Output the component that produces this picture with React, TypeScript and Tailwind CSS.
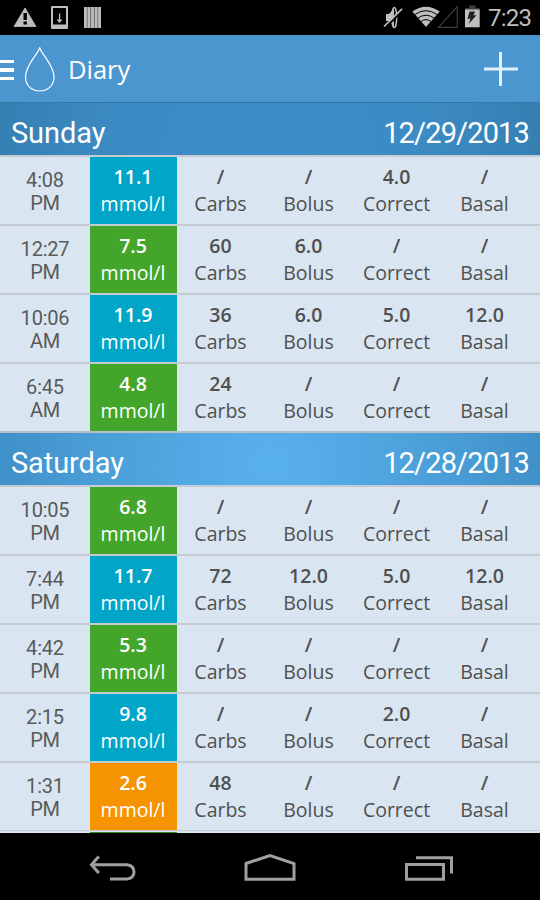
import { Fragment } from 'react';

type Level = 'high' | 'ok' | 'low';

interface Entry {
  time: string;
  half: string;
  glucose: string;
  level: Level;
  values: string[];
}

interface Day {
  name: string;
  date: string;
  header: string;
  entries: Entry[];
}

const columns = ['Carbs', 'Bolus', 'Correct', 'Basal'];

const levelColors: Record<Level, string> = {
  high: 'bg-[#00a5c8]',
  ok: 'bg-[#43a62a]',
  low: 'bg-[#f59300]',
};

const days: Day[] = [
  {
    name: 'Sunday',
    date: '12/29/2013',
    header: 'h-[52px] bg-[radial-gradient(circle_340px_at_50%_110%,#3f8dc8_0%,#3c8ac2_50%,#337cae_88%)]',
    entries: [
      { time: '4:08', half: 'PM', glucose: '11.1', level: 'high', values: ['/', '/', '4.0', '/'] },
      { time: '12:27', half: 'PM', glucose: '7.5', level: 'ok', values: ['60', '6.0', '/', '/'] },
      { time: '10:06', half: 'AM', glucose: '11.9', level: 'high', values: ['36', '6.0', '5.0', '12.0'] },
      { time: '6:45', half: 'AM', glucose: '4.8', level: 'ok', values: ['24', '/', '/', '/'] },
    ],
  },
  {
    name: 'Saturday',
    date: '12/28/2013',
    header: 'h-[54px] border-t-2 border-[#b9bfc9] bg-[radial-gradient(circle_280px_at_50%_60%,#59b1ec_0%,#4b9fd8_60%,#3f8fc7_100%)]',
    entries: [
      { time: '10:05', half: 'PM', glucose: '6.8', level: 'ok', values: ['/', '/', '/', '/'] },
      { time: '7:44', half: 'PM', glucose: '11.7', level: 'high', values: ['72', '12.0', '5.0', '12.0'] },
      { time: '4:42', half: 'PM', glucose: '5.3', level: 'ok', values: ['/', '/', '/', '/'] },
      { time: '2:15', half: 'PM', glucose: '9.8', level: 'high', values: ['/', '/', '2.0', '/'] },
      { time: '1:31', half: 'PM', glucose: '2.6', level: 'low', values: ['48', '/', '/', '/'] },
    ],
  },
];

function StatusBar() {
  return (
    <div className="flex h-[35px] shrink-0 items-center justify-between bg-black">
      <svg width="120" height="35" viewBox="0 0 120 35" fill="#bebebe">
        <path d="M25 8 L36 26.5 H14 Z" stroke="#bebebe" strokeWidth="0.8" strokeLinejoin="round" />
        <path d="M23.500 13 h3.400 v7 h-3.400 z M23.500 21.500 h3.400 v3 h-3.400 z" fill="#000" />
        <path fillRule="evenodd" d="M52 6 h15 q1 0 1 1 v21 q0 1 -1 1 h-15 q-1 0 -1 -1 v-21 q0 -1 1 -1 z M53 8 v16.500 h13 v-16.500 z" />
        <path d="M58.900 13.500 h1.300 v6 h2.300 l-3 3.500 l-3 -3.500 h2.400 z" />
        <path d="M84 7 h2.800 v21 h-2.800 z M87.500 7 h2.800 v21 h-2.800 z M91.100 7 h2.800 v21 h-2.800 z M94.700 7 h2.800 v21 h-2.800 z M98.200 7 h2.800 v21 h-2.800 z" />
        <path d="M84 7 h17 v21 h-17 z" opacity="0.45" />
      </svg>
      <div className="flex items-center">
        <svg width="106" height="35" viewBox="380 0 106 35">
          <path d="M386 14 h3 l5 -5.500 v18 l-5 -5.500 h-3 z" fill="#bebebe" />
          <ellipse cx="394.300" cy="17.500" rx="2.400" ry="10" fill="none" stroke="#bebebe" strokeWidth="1.500" />
          <path d="M385 28 L403 10.500" stroke="#000" strokeWidth="2" />
          <path d="M384 26.500 L402 8.800" stroke="#bebebe" strokeWidth="1.700" />
          <path d="M426 27 L412.300 11.500 Q426 1.800 439.700 11.500 Z" fill="#bebebe" />
          <path d="M414.500 14.800 Q426 6.500 437.500 14.800 M417.500 18.300 Q426 12.200 434.500 18.300 M420.500 21.800 Q426 17.500 431.500 21.800" fill="none" stroke="#000" strokeWidth="1" />
          <path d="M438.500 27.300 L457.300 6.500 V27.300 Z" fill="none" stroke="#3c3c3c" strokeWidth="1.200" />
          <path d="M469 5.500 h6.500 v2.500 h4 v3 h-14.500 v-3 h4 z" fill="#3c3c3c" />
          <path d="M465 9.500 h14.700 v17.800 h-14.700 z" fill="#bebebe" />
          <path d="M469.500 11.500 h5.500 l-1.300 4 l3 -0.500 l-8 9 l1.800 -5.500 l-3 0.600 z" fill="#222" />
        </svg>
        <span className="w-[54px] pt-[2px] pl-[2px] font-[Roboto,sans-serif] text-[24px] leading-[33px] font-normal tracking-[-0.8px] text-[#bebebe]">7:23</span>
      </div>
    </div>
  );
}

function AppBar() {
  return (
    <div className="flex h-[68px] shrink-0 items-center border-b border-[#3577a6] bg-[#4b96cf]">
      <div className="mt-[3px] flex w-[14px] flex-col gap-[5px]">
        <div className="h-[3.5px] bg-white" />
        <div className="h-[3.5px] bg-white" />
        <div className="h-[3.5px] bg-white" />
      </div>
      <svg className="ml-[9px]" width="34" height="50" viewBox="0 0 34 50">
        <path d="M16.700 3.300 C15.500 10 2.500 20.500 2.500 33 C2.500 41.500 8.500 47 16.700 47 C25 47 31 41.500 31 33 C31 20.500 18 10 16.700 3.300 Z" fill="none" stroke="#fff" strokeWidth="1.200" />
      </svg>
      <h1 className="ml-[11px] text-[25.5px] leading-[34px] text-white">Diary</h1>
      <div className="mr-[22px] ml-auto">
        <svg width="34" height="34" viewBox="0 0 34 34">
          <path d="M0 17 H34 M16.500 0 V34" stroke="#e4f0f9" strokeWidth="3" />
        </svg>
      </div>
    </div>
  );
}

function EntryRow({ entry }: { entry: Entry }) {
  return (
    <div className="flex h-[69px] shrink-0 border-t-2 border-[#c6cad2]">
      <div className="w-[90px] pt-[12px] text-center font-[Roboto,sans-serif] text-[20px] leading-[23px] tracking-[-0.2px] text-[#5a5a5a]">
        <div>{entry.time}</div>
        <div>{entry.half}</div>
      </div>
      <div className={`w-[87px] pt-[6px] pr-px text-center text-[19.5px] leading-[27px] text-white ${levelColors[entry.level]}`}>
        <div className="font-semibold">{entry.glucose}</div>
        <div>mmol/l</div>
      </div>
      {columns.map((c, i) => (
        <div key={c} className="w-[88px] pt-[6px] pr-px text-center text-[19.5px] leading-[27px]">
          <div className="font-semibold">{entry.values[i]}</div>
          <div>{c}</div>
        </div>
      ))}
    </div>
  );
}

function NavBar() {
  return (
    <div className="h-[67px] shrink-0 bg-black">
      <svg width="540" height="67" viewBox="0 833 540 67" fill="none" stroke="#a0a0a0" strokeWidth="3">
        <path d="M91 864.800 H126.500 Q134 865.500 134 872 Q134 878.500 126.500 879 H110" />
        <path d="M98.800 856.500 L91.500 864.800 L98.800 873" />
        <path d="M246 863.500 L270 855.500 L294 863.500 V879.200 H246 Z" />
        <path d="M406.500 864.500 H443.500 V879.200 H406.500 Z" />
        <path d="M416 857.700 H451.500 V873.500" />
      </svg>
    </div>
  );
}

export default function App() {
  return (
    <div className="flex h-[900px] w-[540px] flex-col overflow-hidden bg-[#d9e6f1] font-['Open_Sans',sans-serif] text-[#505050]">
      <StatusBar />
      <AppBar />
      <div className="flex min-h-0 flex-1 flex-col overflow-hidden">
        {days.map(day => (
          <Fragment key={day.name}>
            <div className={`flex shrink-0 items-center justify-between px-[11px] pt-[9px] font-[Roboto,sans-serif] text-[29px] leading-[43px] text-white ${day.header}`}>
              <span className="tracking-[-0.1px]">{day.name}</span>
              <span className="tracking-[-0.85px]">{day.date}</span>
            </div>
            {day.entries.map(entry => (
              <EntryRow key={entry.time} entry={entry} />
            ))}
          </Fragment>
        ))}
        {/* top edge of the next row, hidden behind the nav bar */}
        <div className="flex flex-1 border-t border-[#c6cad2] pl-[90px]">
          <div className="mt-px w-[87px] bg-[#2f8a1c]" />
        </div>
      </div>
      <NavBar />
    </div>
  );
}
